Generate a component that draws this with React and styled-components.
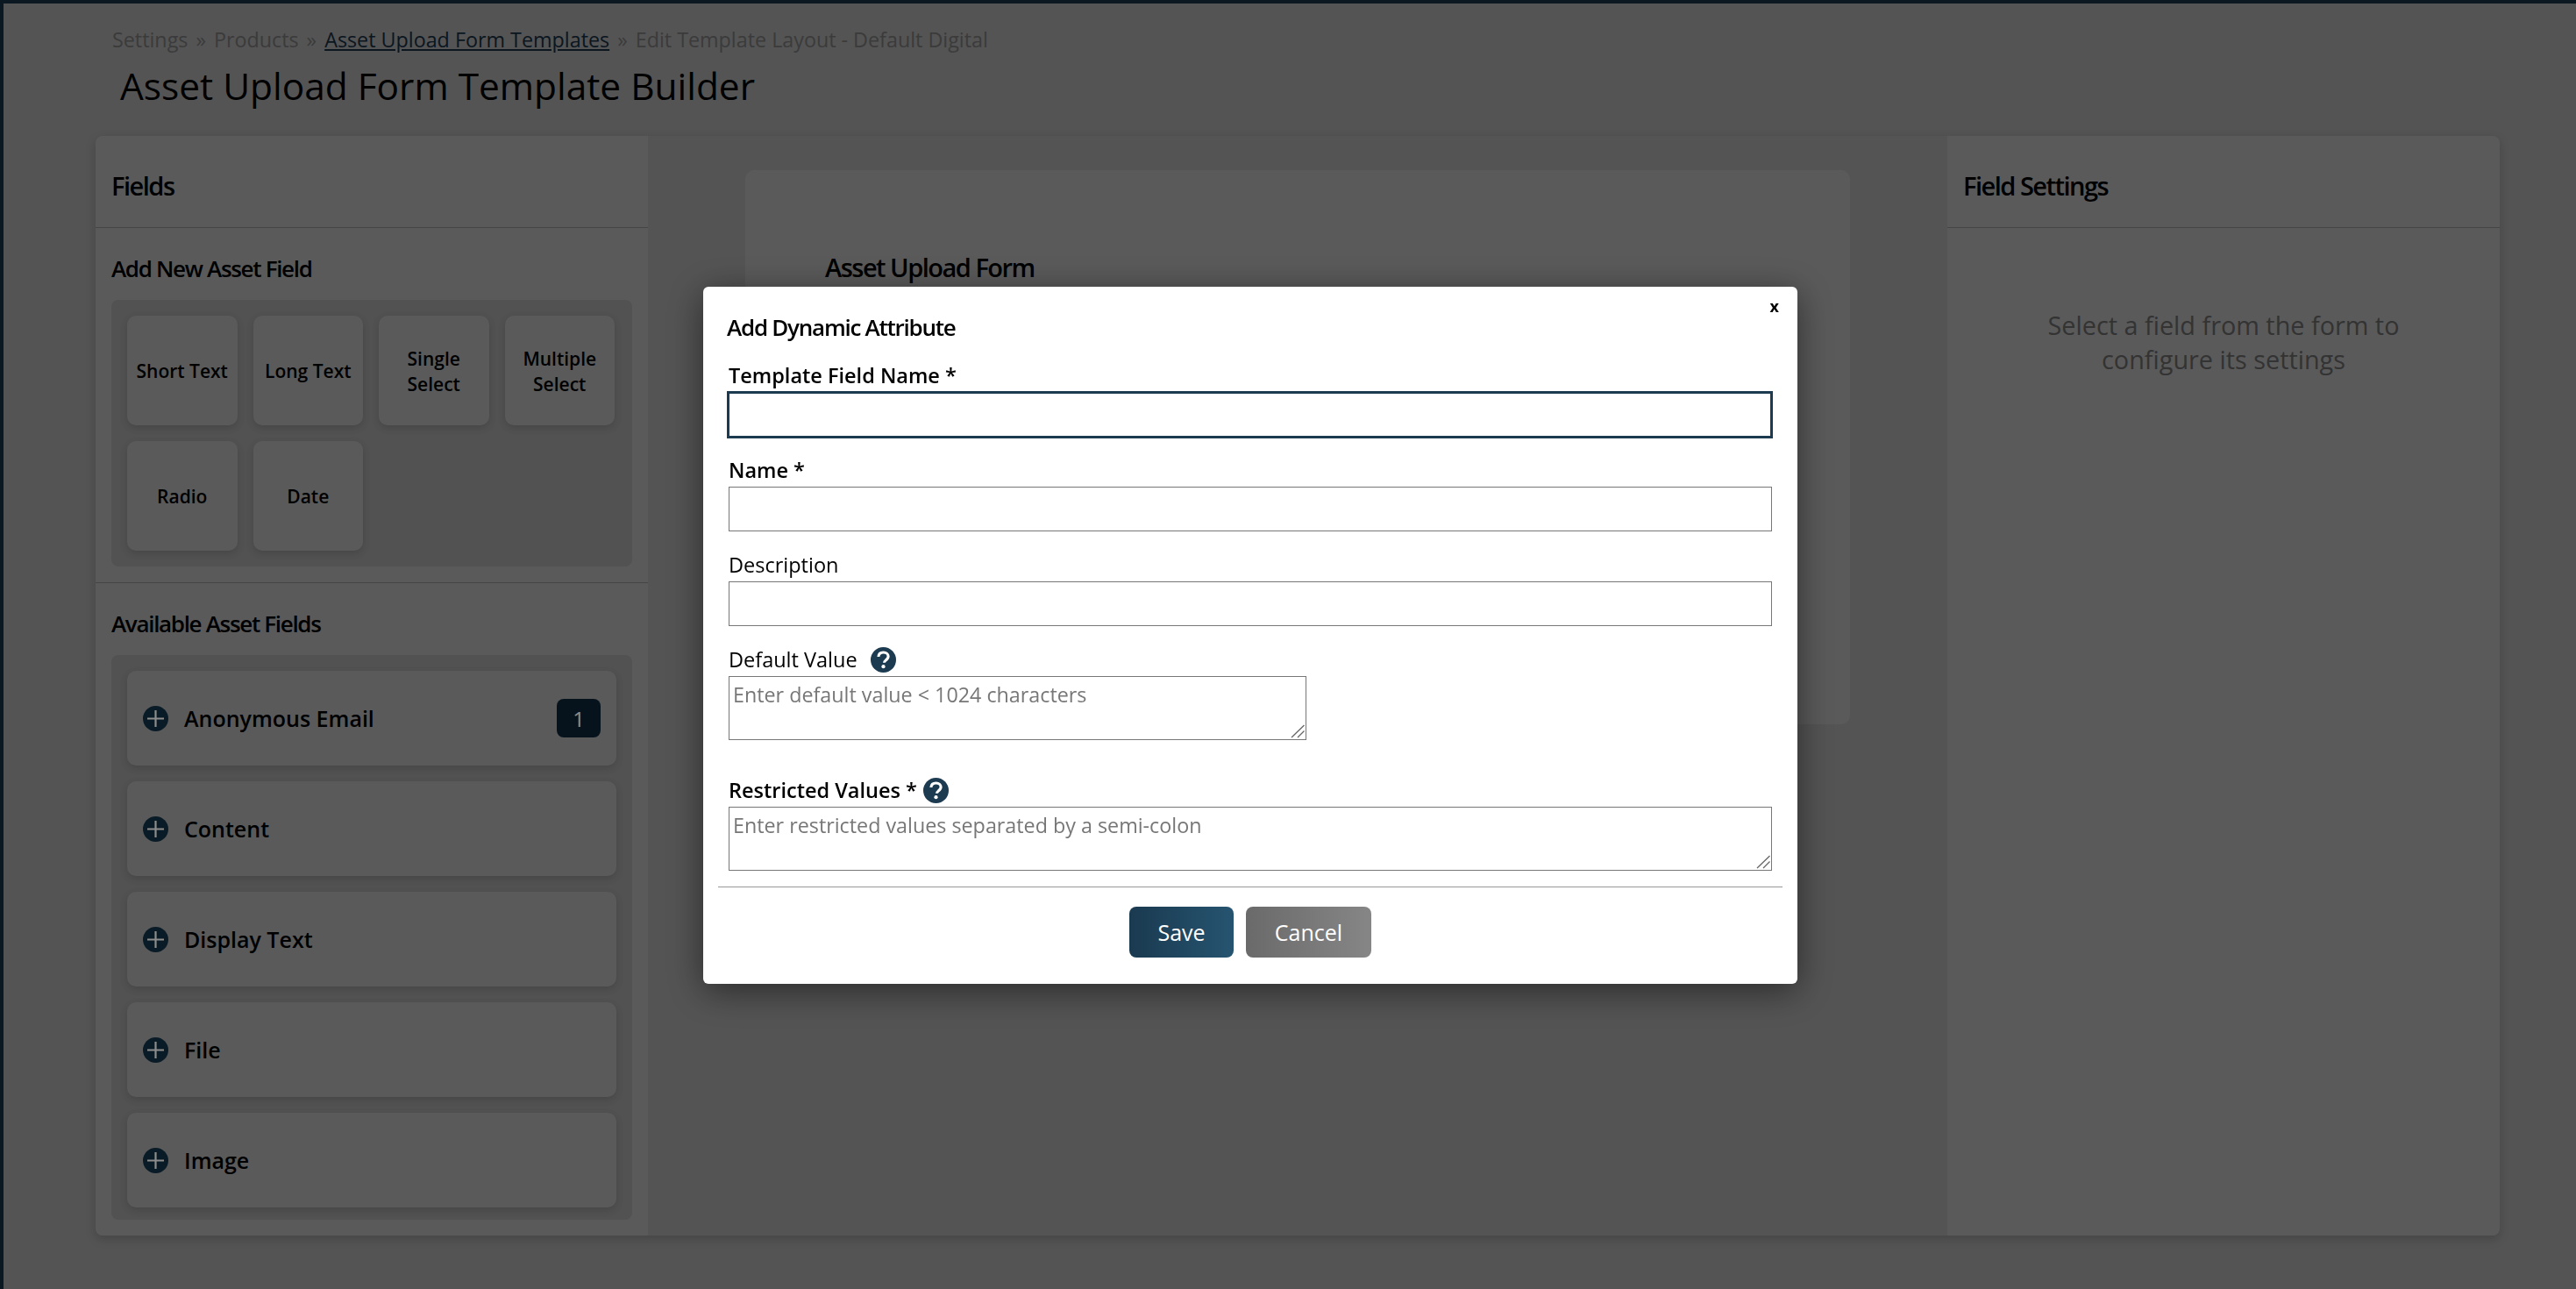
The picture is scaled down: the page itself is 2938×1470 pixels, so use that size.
import React from 'react';
import styled, { createGlobalStyle } from 'styled-components';

const GlobalStyle = createGlobalStyle`
  html, body { margin: 0; padding: 0; }
  body {
    background: #999;
    font-family: "Open Sans", "Liberation Sans", sans-serif;
    overflow: hidden;
  }
  * { box-sizing: border-box; }
`;

const Shell = styled.div`
  height: 1470px;
  border-top: 4px solid #142c3c;
  border-left: 4px solid #142c3c;
  background: #999;
  padding: 0 87px 0 105px;
`;

const Breadcrumb = styled.nav`
  display: flex;
  gap: 9px;
  padding: 25px 0 0 19px;
  font-size: 23.3px;
  line-height: 32px;
  color: #6c6c6c;
`;

const CrumbLink = styled.a`
  color: #14293a;
  text-decoration: underline;
`;

const PageTitle = styled.h1`
  margin: 7px 0 0 28px;
  font-size: 42.4px;
  line-height: 60px;
  font-weight: 400;
  color: #000;
`;

const Builder = styled.div`
  display: grid;
  grid-template-columns: 630px 1fr 630px;
  height: 1254px;
  margin-top: 27px;
  border-radius: 8px;
  background: #999;
  box-shadow: 0 4px 12px rgba(0, 0, 0, 0.18);
`;

const Panel = styled.aside`
  background: #a4a4a4;
  border-radius: ${props => (props.$side === 'left' ? '8px 0 0 8px' : '0 8px 8px 0')};
`;

const PanelHeader = styled.header`
  height: 105px;
  padding: 10px 18px 0;
  display: flex;
  align-items: center;
  border-bottom: 1px solid #7f7f7f;
`;

const PanelTitle = styled.h2`
  margin: 0;
  font-size: 29px;
  line-height: 40px;
  font-weight: 600;
  letter-spacing: -1.5px;
  color: #000;
`;

const Section = styled.section`
  padding: 0 18px 18px;
  border-bottom: ${props => (props.$divided ? '1px solid #7f7f7f' : 'none')};
`;

const SectionTitle = styled.h3`
  margin: 0;
  padding: 32px 0 22px;
  font-size: 26px;
  line-height: 28px;
  font-weight: 600;
  letter-spacing: -1.32px;
  color: #000;
`;

const Tray = styled.div`
  background: #959595;
  border-radius: 8px;
  padding: 18px 18px ${props => props.$bottom}px;
`;

const TypeGrid = styled.div`
  display: grid;
  grid-template-columns: repeat(4, 125.5px);
  grid-auto-rows: 125px;
  gap: 18px;
`;

const TypeButton = styled.div`
  display: flex;
  align-items: center;
  justify-content: center;
  text-align: center;
  padding-top: 2px;
  background: #a4a4a4;
  border-radius: 10px;
  box-shadow: 0 3px 8px rgba(0, 0, 0, 0.15);
  font-size: 21px;
  line-height: 29px;
  font-weight: 600;
  color: #000;
`;

const FieldList = styled.div`
  display: flex;
  flex-direction: column;
  gap: 18px;
`;

const FieldRow = styled.div`
  display: flex;
  align-items: center;
  height: 108px;
  padding: 0 18px;
  background: #a4a4a4;
  border-radius: 10px;
  box-shadow: 0 3px 8px rgba(0, 0, 0, 0.15);
`;

const FieldName = styled.span`
  flex: 1;
  margin-left: 18px;
  font-size: 25px;
  font-weight: 600;
  color: #000;
`;

const CountBadge = styled.span`
  width: 50px;
  height: 44px;
  display: flex;
  align-items: center;
  justify-content: center;
  border-radius: 8px;
  background: #0d2433;
  color: #fff;
  font-size: 24px;
`;

const Canvas = styled.main`
  padding: 39px 111px 0;
`;

const FormCard = styled.div`
  height: 632px;
  padding: 90px 91px 0;
  background: #a4a4a4;
  border-radius: 10px;
`;

const FormTitle = styled.h2`
  margin: 0;
  font-size: 29px;
  line-height: 42px;
  font-weight: 600;
  letter-spacing: -1.5px;
  color: #000;
`;

const EmptyHint = styled.p`
  margin: 91px 60px 0;
  text-align: center;
  font-size: 28.8px;
  line-height: 39px;
  color: #5d5d5d;
`;

const Overlay = styled.div`
  position: fixed;
  inset: 0;
  padding: 327px 0 0 802px;
  background: rgba(0, 0, 0, 0.45);
`;

const Modal = styled.div`
  position: relative;
  width: 1248px;
  height: 795px;
  padding: 28px 28px 0;
  background: #fff;
  border-radius: 6px;
  box-shadow: 0 8px 40px rgba(0, 0, 0, 0.5);
`;

const CloseButton = styled.span`
  position: absolute;
  top: 8px;
  right: 21px;
  font-size: 18px;
  line-height: 28px;
  font-weight: 700;
  color: #000;
`;

const ModalTitle = styled.h2`
  margin: 0 0 0 -1px;
  font-size: 26px;
  line-height: 36px;
  font-weight: 600;
  letter-spacing: -1.25px;
  color: #000;
`;

const Field = styled.div`
  margin-top: ${props => props.$gap}px;
`;

const Label = styled.label`
  display: flex;
  align-items: center;
  gap: ${props => props.$iconGap || 0}px;
  height: 30px;
  padding-left: 1px;
  font-size: 23.5px;
  font-weight: ${props => (props.$strong ? 600 : 500)};
  color: #000;
`;

const TextInput = styled.input`
  display: block;
  width: ${props => (props.$focused ? '1193px' : '1190px')};
  height: ${props => (props.$focused ? '54px' : '51px')};
  margin: ${props => (props.$focused ? '3px 0 -2px -1px' : '4px 0 0 1px')};
  border: ${props => (props.$focused ? '3px solid #1c3a50' : '1px solid #777')};
  border-radius: 0;
  outline: none;
  background: #fff;
`;

const AreaWrap = styled.div`
  position: relative;
  width: ${props => props.$width}px;
  margin: 4px 0 0 1px;
`;

const TextArea = styled.textarea`
  display: block;
  width: 100%;
  height: 73px;
  padding: 4px 4px;
  border: 1px solid #777;
  border-radius: 0;
  outline: none;
  resize: none;
  font-family: inherit;
  font-size: 23.3px;
  line-height: 32px;
  &::placeholder { color: #777; }
`;

const Grip = styled.svg`
  position: absolute;
  right: 2px;
  bottom: 2px;
  width: 16px;
  height: 16px;
  pointer-events: none;
`;

const Footer = styled.div`
  display: flex;
  justify-content: center;
  gap: 14px;
  height: 82px;
  margin: 18px -11px 0;
  padding-top: 22px;
  border-top: 1px solid #999;
`;

const ActionButton = styled.button`
  width: ${props => props.$width}px;
  height: 58px;
  border: none;
  border-radius: 8px;
  background: ${props =>
    props.$secondary
      ? 'linear-gradient(90deg, #6a6a6a, #868686)'
      : 'linear-gradient(90deg, #1a3a50, #265470)'};
  color: #fff;
  font-family: inherit;
  font-size: 25px;
`;

const PlusIcon = () => (
  <svg width="29" height="29" viewBox="0 0 29 29" aria-hidden="true">
    <circle cx="14.5" cy="14.5" r="14.5" fill="#123246" />
    <path d="M14.5 5v19M5 14.5h19" stroke="#fff" strokeWidth="2.2" />
  </svg>
);

const HelpIcon = () => (
  <svg width="29" height="29" viewBox="0 0 29 29" aria-hidden="true">
    <circle cx="14.5" cy="14.5" r="14.5" fill="#1c3a50" />
    <path
      d="M8.9 11c.2-3.3 2.6-5 5.7-5 3.3 0 5.5 2 5.5 4.6 0 2.1-1.1 3.2-2.8 4.3-1.3.9-1.8 1.4-1.8 2.9"
      fill="none"
      stroke="#fff"
      strokeWidth="3.1"
    />
    <circle cx="14.5" cy="22.2" r="2.1" fill="#fff" />
  </svg>
);

const ResizeGrip = () => (
  <Grip viewBox="0 0 16 16" aria-hidden="true">
    <path d="M1 15 15.5 1M8 15l7.5-7.5" stroke="#666" strokeWidth="1.3" fill="none" />
  </Grip>
);

const FIELD_TYPES = [
  ['Short Text'],
  ['Long Text'],
  ['Single', 'Select'],
  ['Multiple', 'Select'],
  ['Radio'],
  ['Date'],
];

const ASSET_FIELDS = [
  { name: 'Anonymous Email', count: 1 },
  { name: 'Content' },
  { name: 'Display Text' },
  { name: 'File' },
  { name: 'Image' },
];

export default function App() {
  return (
    <>
      <GlobalStyle />
      <Shell>
        <Breadcrumb>
          <span>Settings</span>
          <span>»</span>
          <span>Products</span>
          <span>»</span>
          <CrumbLink>Asset Upload Form Templates</CrumbLink>
          <span>»</span>
          <span>Edit Template Layout - Default Digital</span>
        </Breadcrumb>
        <PageTitle>Asset Upload Form Template Builder</PageTitle>
        <Builder>
          <Panel $side="left">
            <PanelHeader>
              <PanelTitle>Fields</PanelTitle>
            </PanelHeader>
            <Section $divided>
              <SectionTitle>Add New Asset Field</SectionTitle>
              <Tray $bottom={18}>
                <TypeGrid>
                  {FIELD_TYPES.map(lines => (
                    <TypeButton key={lines.join(' ')}>
                      <div>
                        {lines.map(line => (
                          <div key={line}>{line}</div>
                        ))}
                      </div>
                    </TypeButton>
                  ))}
                </TypeGrid>
              </Tray>
            </Section>
            <Section>
              <SectionTitle>Available Asset Fields</SectionTitle>
              <Tray $bottom={14}>
                <FieldList>
                  {ASSET_FIELDS.map(field => (
                    <FieldRow key={field.name}>
                      <PlusIcon />
                      <FieldName>{field.name}</FieldName>
                      {field.count && <CountBadge>{field.count}</CountBadge>}
                    </FieldRow>
                  ))}
                </FieldList>
              </Tray>
            </Section>
          </Panel>
          <Canvas>
            <FormCard>
              <FormTitle>Asset Upload Form</FormTitle>
            </FormCard>
          </Canvas>
          <Panel $side="right">
            <PanelHeader>
              <PanelTitle>Field Settings</PanelTitle>
            </PanelHeader>
            <EmptyHint>Select a field from the form to configure its settings</EmptyHint>
          </Panel>
        </Builder>
      </Shell>
      <Overlay>
        <Modal>
          <CloseButton>x</CloseButton>
          <ModalTitle>Add Dynamic Attribute</ModalTitle>
          <Field $gap={22}>
            <Label $strong>Template Field Name *</Label>
            <TextInput $focused />
          </Field>
          <Field $gap={23}>
            <Label $strong>Name *</Label>
            <TextInput />
          </Field>
          <Field $gap={23}>
            <Label>Description</Label>
            <TextInput />
          </Field>
          <Field $gap={23}>
            <Label $iconGap={15}>
              Default Value <HelpIcon />
            </Label>
            <AreaWrap $width={659}>
              <TextArea placeholder="Enter default value < 1024 characters" />
              <ResizeGrip />
            </AreaWrap>
          </Field>
          <Field $gap={42}>
            <Label $strong $iconGap={7}>
              Restricted Values * <HelpIcon />
            </Label>
            <AreaWrap $width={1190}>
              <TextArea placeholder="Enter restricted values separated by a semi-colon" />
              <ResizeGrip />
            </AreaWrap>
          </Field>
          <Footer>
            <ActionButton $width={119}>Save</ActionButton>
            <ActionButton $width={143} $secondary>
              Cancel
            </ActionButton>
          </Footer>
        </Modal>
      </Overlay>
    </>
  );
}
